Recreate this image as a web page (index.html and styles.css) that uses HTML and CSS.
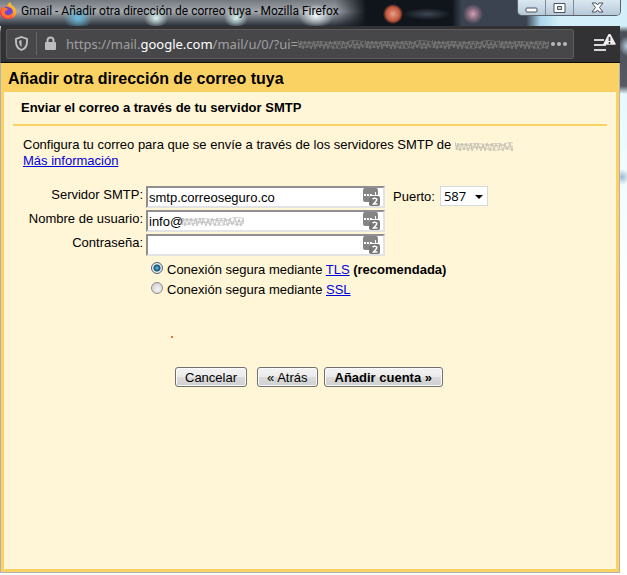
FILE: index.html
```html
<!DOCTYPE html>
<html lang="es">
<head>
  <meta charset="UTF-8">
  <meta name="viewport" content="width=device-width, initial-scale=1.0">
  <title>Gmail - Añadir otra dirección de correo tuya</title>
  <link rel="stylesheet" href="styles.css">
</head>
<body>
  <svg width="0" height="0" class="defs" aria-hidden="true">
    <defs>
      <pattern id="scribble" width="67" height="12" patternUnits="userSpaceOnUse">
        <path d="M0 2l2 8 1-7 2 8 2-8 2 7 2-7 2 8 3-8 1 8 3-8 2 7 1-7 3 8 2-7 2 7 2-8 3 8 2-8 2 7 2-6 3 6 1-7 3 8 2-8 2 7 3-7 2 8 2-7 2 7 2-7 2 6" fill="none" stroke="#888"/>
        <path d="M0 6q8-3 16 0t18-1 17 2 16-1M0 9q9 1 17-1t16 1 18-1 16 1M2 4q7 1 14 0t19 1 15-1 17 0" fill="none" stroke="#888" stroke-opacity=".8"/>
      </pattern>
      <symbol id="key" viewBox="0 0 17 18">
        <path d="M2 0h11q2 0 2 2v5h-6q-3 0-3 3v4H2q-2 0-2-2V2q0-2 2-2z" fill="#858585"/>
        <rect x="6" y="8" width="11" height="10" rx="2" fill="#777"/>
        <path d="M1 6h2v2H1zM4 6h2v2H4zM7 6h2v2H7zM12 4h1v4h-1z" fill="#fff"/>
        <path d="M9.500 11q1-1 2.500-.8 2.500.4 1.500 2.300L10.500 16H14.500" fill="none" stroke="#fff" stroke-width="1.500"/>
      </symbol>
    </defs>
  </svg>
  <div class="window">
    <header class="titlebar">
      <svg class="firefox" viewBox="0 0 17 20" aria-hidden="true">
        <defs>
          <linearGradient id="flame" x1="1" y1="0" x2="0" y2="1">
            <stop offset="0" stop-color="#ffe33c"/>
            <stop offset=".4" stop-color="#ffa020"/>
            <stop offset=".7" stop-color="#ff3b48"/>
            <stop offset="1" stop-color="#d51c70"/>
          </linearGradient>
        </defs>
        <path d="M10 2q1 3 4 5 3 3 2 7-2 5-8 5-7 0-8-6 0-4 2-7l1 2q2-2 4-1 0-3 3-5z" fill="url(#flame)"/>
        <path d="M4 8q2-2 4-1l3 1q3 3 1 6-3 3-6 1-3-3-2-7z" fill="#6b45d8"/>
        <path d="M2 8q4-1 6 1-1 2-3 2-1 3 2 4 4 1 5-3 1 5-4 6-6 0-7-6z" fill="#ff7426"/>
      </svg>
      <span class="title">Gmail - Añadir otra dirección de correo tuya - Mozilla Firefox</span>
      <div class="window-controls">
        <button type="button" aria-label="Minimizar">
          <svg width="13" height="10" viewBox="0 0 13 10"><rect x="1" y="5" width="11" height="4" rx="1" fill="#fff" stroke="#4a5360"/></svg>
        </button>
        <button type="button" aria-label="Maximizar">
          <svg width="13" height="10" viewBox="0 0 13 10"><path d="M1 .5h11v9H1zM4.500 3.500v3h4v-3z" fill="#fff" fill-rule="evenodd" stroke="#4a5360"/></svg>
        </button>
        <button type="button" class="close" aria-label="Cerrar">
          <svg width="13" height="11" viewBox="0 0 13 11"><path d="M1 1h4l1.500 2L8 1h4L8.500 5.500 12 10H8L6.500 8 5 10H1l3.500-4.500z" fill="#fff" stroke="#4a5360"/></svg>
        </button>
      </div>
    </header>

    <nav class="toolbar">
      <div class="urlbar">
        <svg class="shield" width="13" height="15" viewBox="0 0 13 15" aria-hidden="true">
          <path d="M6.500 1L12 3v3q0 6-5.500 8Q1 12 1 6V3z" fill="none" stroke="#c2c2c4" stroke-width="1.800"/>
          <path d="M6.500 4v7Q4 9 4 5z" fill="#c2c2c4"/>
        </svg>
        <svg class="lock" width="13" height="15" viewBox="0 0 13 15" aria-hidden="true">
          <path d="M3.500 7V4.500a3 3 0 0 1 6 0V7" fill="none" stroke="#bcbcbe" stroke-width="2"/>
          <rect x="1" y="6" width="11" height="8" rx="1" fill="#bcbcbe"/>
        </svg>
        <span class="url">https://mail.<b>google.com</b>/mail/u/0/?ui=</span>
        <svg class="scribble url-scribble" aria-hidden="true"><rect width="100%" height="12" fill="url(#scribble)"/></svg>
        <button type="button" class="dots" aria-label="Acciones de página">
          <svg width="16" height="4" viewBox="0 0 16 4"><circle cx="2" cy="2" r="2"/><circle cx="8" cy="2" r="2"/><circle cx="14" cy="2" r="2"/></svg>
        </button>
      </div>
      <button type="button" class="menu" aria-label="Menú">
        <svg width="22" height="20" viewBox="0 0 22 20">
          <path d="M0 6h10M0 11h12M0 16h12" stroke="#d6d6d8" stroke-width="2"/>
          <path d="M15.500 -.2L21 10H10z" fill="#eee" stroke="#eee" stroke-width="1.500" stroke-linejoin="round"/>
          <path d="M15.500 3v4M15.500 8v2" stroke="#333" stroke-width="1.600"/>
        </svg>
      </button>
    </nav>

    <main class="page">
      <h1>Añadir otra dirección de correo tuya</h1>
      <div class="panel">
        <h2>Enviar el correo a través de tu servidor SMTP</h2>
        <p class="intro">
          Configura tu correo para que se envíe a través de los servidores SMTP de
          <svg class="scribble domain" aria-hidden="true"><rect width="100%" height="12" fill="url(#scribble)"/></svg><br>
          <a href="#">Más información</a>
        </p>
        <form>
          <div class="row">
            <label class="name" for="server">Servidor SMTP:</label>
            <div class="field">
              <input type="text" id="server" value="smtp.correoseguro.co">
              <svg class="key" aria-hidden="true"><use href="#key"/></svg>
            </div>
            <label class="port-label" for="port">Puerto:</label>
            <div class="port">
              <select id="port">
                <option>587</option>
                <option>465</option>
                <option>25</option>
              </select>
            </div>
          </div>
          <div class="row">
            <label class="name" for="user">Nombre de usuario:</label>
            <div class="field">
              <input type="text" id="user" value="info@">
              <svg class="scribble user-scribble" aria-hidden="true"><rect width="100%" height="12" fill="url(#scribble)"/></svg>
              <svg class="key" aria-hidden="true"><use href="#key"/></svg>
            </div>
          </div>
          <div class="row">
            <label class="name" for="password">Contraseña:</label>
            <div class="field">
              <input type="password" id="password">
              <svg class="key" aria-hidden="true"><use href="#key"/></svg>
            </div>
          </div>
          <div class="options">
            <div class="option">
              <input type="radio" name="security" id="tls" checked>
              <label for="tls">Conexión segura mediante <a href="#">TLS</a> <b>(recomendada)</b></label>
            </div>
            <div class="option">
              <input type="radio" name="security" id="ssl">
              <label for="ssl">Conexión segura mediante <a href="#">SSL</a></label>
            </div>
          </div>
          <div class="status"><span class="speck"></span></div>
          <div class="buttons">
            <button type="button" class="cancel">Cancelar</button>
            <button type="button">« Atrás</button>
            <button type="submit" class="primary">Añadir cuenta »</button>
          </div>
        </form>
      </div>
    </main>
  </div>
</body>
</html>
```

FILE: styles.css
```css
* {
  box-sizing: border-box;
}
body {
  margin: 0;
  min-height: 100vh;
  display: flex;
  flex-direction: column;
  background:
    radial-gradient(ellipse 8px 10px at 100% 46px, #b5cbdc, transparent),
    radial-gradient(ellipse 8px 8px at calc(100% - 5px) 177px, #9dbbd6, transparent),
    linear-gradient(#d3f0fa 0, #d3f0fa 26px, #4a4e56 32px, #555a63 86px, #e6f9fe 94px, #f4fcff 200px, #fff 320px);
  font-family: "Liberation Sans", Arial, sans-serif;
  font-size: 13px;
  color: #000;
}
button {
  font-family: inherit;
  font-size: inherit;
  padding: 0;
}
a {
  color: #0000e0;
}
.defs {
  position: absolute;
}
.window {
  flex: 1;
  display: flex;
  flex-direction: column;
  padding-bottom: 2px;
}

/* Title bar */
.titlebar {
  height: 26px;
  display: flex;
  align-items: flex-start;
  background:
    radial-gradient(circle at 393px 14px, #e9a08a 0, #c0553a 7px, transparent 10px),
    radial-gradient(circle at 473px 14px, #c9a6b4 0, #8b6b80 5px, transparent 10px),
    radial-gradient(ellipse 24px 6px at 427px 14px, #3d4652, transparent),
    radial-gradient(ellipse 18px 12px at 316px 16px, #eef8fc, transparent),
    radial-gradient(ellipse 14px 12px at 78px 18px, #69bfe0, transparent),
    radial-gradient(ellipse 12px 10px at 156px 18px, #d5f0ee, transparent),
    radial-gradient(ellipse 12px 10px at 236px 18px, #d5f0ee, transparent),
    linear-gradient(90deg, transparent 335px, #10151b 366px, #10151b 452px, #3b4350 462px, #3b4350 526px, #a9d4ea 540px, #d3f0fa 560px),
    linear-gradient(#74797f, #a4a8ae 45%, #555b64 80%, #2b3038);
}
.firefox {
  width: 17px;
  height: 20px;
}
.title {
  flex: 1;
  padding-left: 4px;
  font-family: Roboto, sans-serif;
  font-size: 12px;
  line-height: 22px;
  white-space: nowrap;
}
.window-controls {
  display: flex;
  height: 16px;
  margin-right: 6px;
  border: 1px solid #59616b;
  border-top: 0;
  border-radius: 0 0 5px 5px;
  overflow: hidden;
}
.window-controls button {
  width: 28px;
  display: flex;
  align-items: center;
  justify-content: center;
  border: 0;
  border-right: 1px solid #7f8a96;
  background: linear-gradient(#dbe7f0, #b6c9d8);
}
.window-controls .close {
  width: 46px;
  border-right: 0;
}

/* Toolbar */
.toolbar {
  height: 37px;
  margin: 0 7px 0 1px;
  display: flex;
  align-items: center;
  justify-content: space-between;
  padding: 0 4px 1px 5px;
  background: #323234;
  border-bottom: 1px solid #0c0c0d;
}
.urlbar {
  flex: 1;
  min-width: 0;
  height: 30px;
  margin-right: 20px;
  padding: 0 6px 0 8px;
  display: flex;
  align-items: center;
  background: #474749;
  border: 1px solid #5c5c5e;
  border-radius: 2px;
}
.shield {
  flex: none;
  margin-right: 8px;
}
.lock {
  flex: none;
  box-sizing: content-box;
  padding: 4px 0 4px 7px;
  border-left: 1px solid #66666a;
}
.url {
  padding-left: 9px;
  font-family: "Noto Sans", sans-serif;
  font-size: 13px;
  white-space: nowrap;
  color: #a0a0a2;
}
.url b {
  font-weight: normal;
  color: #fff;
}
.scribble {
  height: 12px;
}
.url-scribble {
  flex: 1;
  width: 0;
  min-width: 0;
  opacity: .7;
}
.dots {
  display: flex;
  margin-left: 2px;
  border: 0;
  background: none;
  fill: #b8b8ba;
}
.menu {
  display: flex;
  border: 0;
  background: none;
}

/* Page */
.page {
  flex: 1;
  display: flex;
  flex-direction: column;
  margin: 0 7px 0 0;
  padding: 0 3px 3px;
  background: #fad163;
  border: 1px solid #b3b3b3;
  border-top: 0;
}
h1 {
  margin: 0;
  padding: 0 4px;
  font-size: 16px;
  line-height: 32px;
  height: 29px;
}
.panel {
  flex: 1;
  padding: 0 9px;
  background: #fff5d7;
}
h2 {
  margin: 0;
  padding: 0 8px;
  font-size: 13px;
  line-height: 32px;
  border-bottom: 2px solid #fad163;
}
.intro {
  margin: 0;
  padding: 11px 10px 0;
  line-height: 16px;
}
.domain {
  width: 58px;
  opacity: .45;
  vertical-align: -3px;
}
form {
  padding-top: 17px;
}
.row {
  display: flex;
  height: 24px;
}
.name {
  width: 133px;
  padding-right: 3px;
  line-height: 18px;
  text-align: right;
}
.field {
  position: relative;
  width: 239px;
}
.field input {
  width: 100%;
  height: 22px;
  padding: 0 24px 0 1px;
  border: 2px solid;
  border-color: #8f8f8f #e3e3e3 #e3e3e3 #8f8f8f;
  background: #fff;
  font-family: inherit;
  font-size: 13px;
}
.key {
  position: absolute;
  top: 2px;
  right: 5px;
  width: 17px;
  height: 18px;
}
.user-scribble {
  position: absolute;
  top: 5px;
  left: 34px;
  width: 64px;
  opacity: .5;
}
.port-label {
  padding: 0 5px 0 8px;
  line-height: 22px;
}
.port {
  position: relative;
  width: 48px;
  height: 20px;
}
.port::after {
  content: "";
  position: absolute;
  top: 9px;
  right: 5px;
  border: 4px solid transparent;
  border-top-color: #000;
  border-bottom: 0;
  pointer-events: none;
}
select {
  appearance: none;
  width: 100%;
  height: 20px;
  padding: 0 3px;
  border: 1px solid #d3dae0;
  border-radius: 0;
  background: #fff;
  font-family: "Open Sans", sans-serif;
  font-size: 13px;
  line-height: 18px;
  color: #000;
}
.options {
  padding: 2px 0 0 137px;
}
.option {
  display: flex;
  height: 20px;
}
.option label {
  padding-left: 4px;
  line-height: 20px;
}
input[type="radio"] {
  appearance: none;
  width: 12px;
  height: 12px;
  margin: 2px 0 0 1px;
  border: 1px solid #8a8a8a;
  border-radius: 50%;
  background: radial-gradient(circle at 60% 65%, #f4f4f4, #c9c9c9);
}
input[type="radio"]:checked {
  border-color: #50626e;
  background: radial-gradient(circle, #5cc3ee 0, #14506f 3px, #e4ecf0 4px);
}
.status {
  height: 67px;
  padding: 36px 0 0 158px;
}
.speck {
  display: block;
  width: 2px;
  height: 2px;
  background: #e8703a;
}
.buttons {
  display: flex;
  padding-left: 162px;
}
.buttons button {
  height: 20px;
  margin-right: 6px;
  padding: 0 9px;
  border: 1px solid #707070;
  border-radius: 3px;
  background: linear-gradient(#f3f3f3, #ebebeb 50%, #dcdcdc 50%, #cfcfcf);
  box-shadow: inset 0 0 0 1px #fafafa;
  color: #000;
}
.buttons .cancel {
  margin-right: 10px;
}
.buttons .primary {
  padding: 0 10px;
  font-weight: bold;
}
```
